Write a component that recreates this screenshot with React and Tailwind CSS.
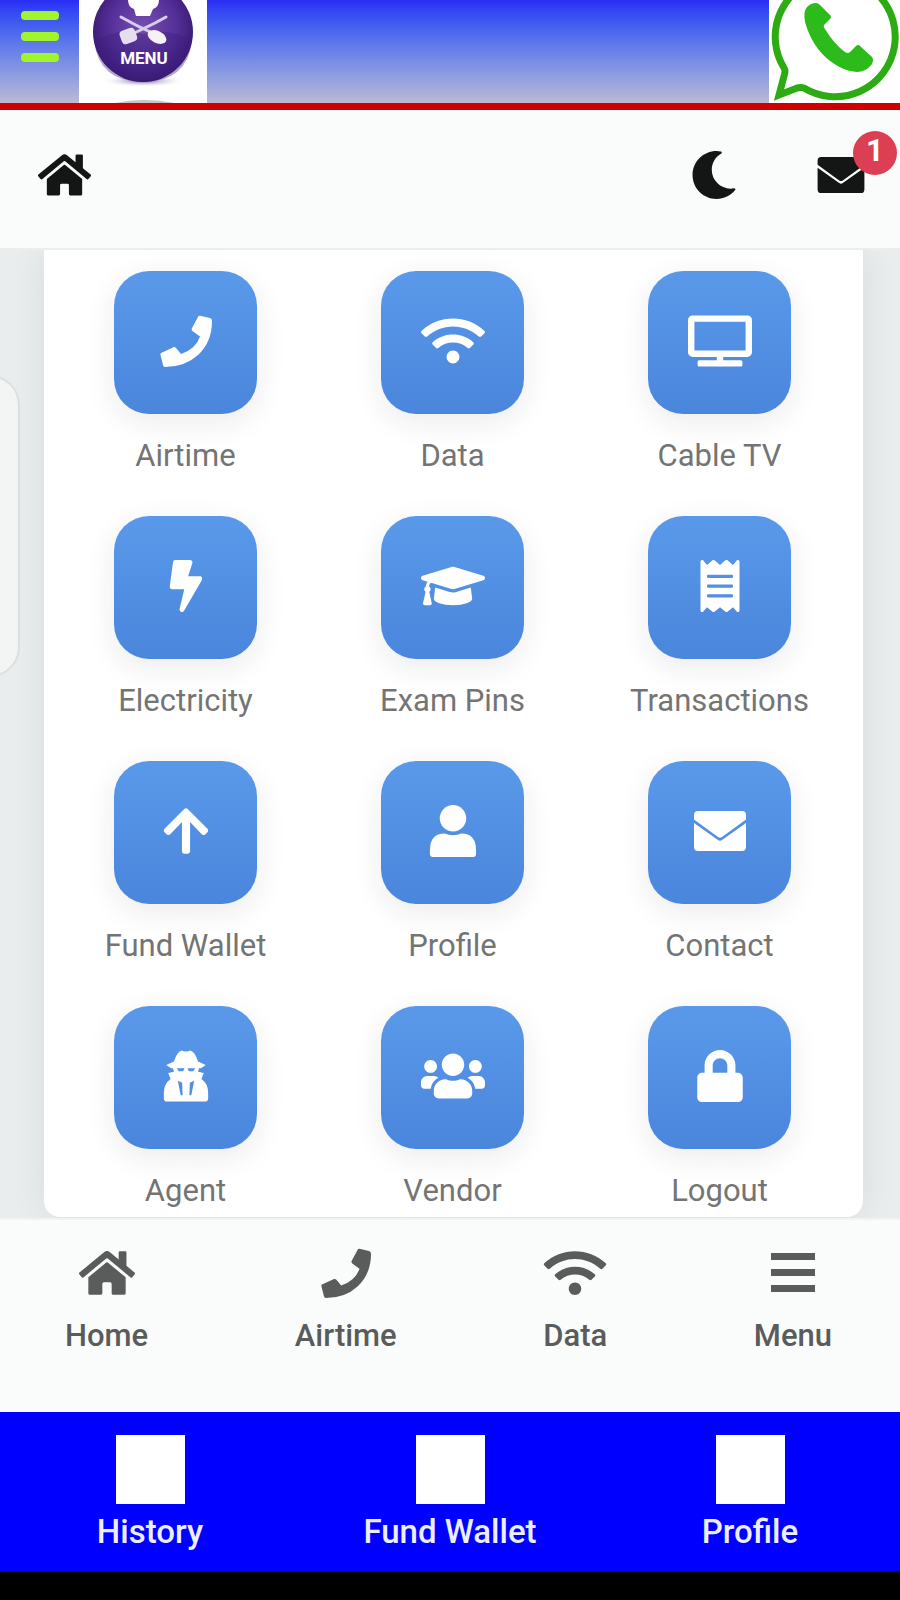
import {
  FaArrowUp, FaBolt, FaGraduationCap, FaHome, FaLock, FaMoon,
  FaReceipt, FaTv, FaUsers, FaWifi,
} from "react-icons/fa";

function PhoneIcon({ className }) {
  return (
    <svg viewBox="0 0 52 52" fill="currentColor" className={className}>
      <path d="M38 2 Q38.5 .5 40 .8 L50 3 Q52 3.5 52 6 Q52 27 38 40 Q25 52 5 52 Q3.5 52 3 50 L.5 40 Q0 38.3 1.6 37.7 L13.5 32.3 Q15 31.7 16 33 L21 39 Q36 34 40 21.5 L32.5 16 Q31.2 15 31.8 13.5Z" />
    </svg>
  );
}

function UserIcon({ className }) {
  return (
    <svg viewBox="0 0 47 53" fill="currentColor" className={className}>
      <circle cx="23.5" cy="13.5" r="13.5" />
      <path d="M0 46 Q0 29 15 29 Q23.5 32.5 32 29 Q47 29 47 46 V50 Q47 53 44 53 H3 Q0 53 0 50Z" />
    </svg>
  );
}

function EnvelopeIcon({ className }) {
  return (
    <svg viewBox="0 0 52 40" fill="currentColor" className={className}>
      <path d="M4 0 H48 Q52 0 52 4 V8.5 L28 26 Q26 27.5 24 26 L0 8.5 V4 Q0 0 4 0Z" />
      <path d="M0 12 L24 29 Q26 30.5 28 29 L52 12 V36 Q52 40 48 40 H4 Q0 40 0 36Z" />
    </svg>
  );
}

function AgentIcon({ className }) {
  return (
    <svg viewBox="0 0 47 54" fill="currentColor" fillRule="evenodd" className={className}>
      <path d="M11 12 Q14 2 19 .5 Q23.5 2.5 28 .5 Q33 2 36 12 L44 15.5 L39 19 H37 L36 22.5 L42 24 L39.5 30 Q46.5 35 46.5 44 V50 Q46.5 53.5 43 53.5 H4 Q.5 53.5 .5 50 V44 Q.5 35 7.5 30 L5 24 L11 22.5 L10 19 H8 L3 15.5Z M14 19 H22 L20.5 22 H16Z M25 19 H33 L31 22 H26.5Z M15 32 L19.5 34 L20 47 L18 47Z M32 32 L27.5 34 L27 47 L29 47Z" />
    </svg>
  );
}

function BarsIcon({ className }) {
  return (
    <svg viewBox="0 0 44 50" fill="currentColor" className={className}>
      <path d="M0 5h44v7H0z M0 21h44v7H0z M0 37h44v7H0z" />
    </svg>
  );
}

const SERVICES = [
  { label: "Airtime", icon: PhoneIcon, size: "w-[52px] h-[52px]" },
  { label: "Data", icon: FaWifi, size: "w-16 h-[52px]" },
  { label: "Cable TV", icon: FaTv, size: "w-16 h-[52px]" },
  { label: "Electricity", icon: FaBolt, size: "w-[52px] h-[52px]" },
  { label: "Exam Pins", icon: FaGraduationCap, size: "w-16 h-[52px]" },
  { label: "Transactions", icon: FaReceipt, size: "w-[52px] h-[52px]" },
  { label: "Fund Wallet", icon: FaArrowUp, size: "w-[52px] h-[52px]" },
  { label: "Profile", icon: UserIcon, size: "w-12 h-[52px]" },
  { label: "Contact", icon: EnvelopeIcon, size: "w-[52px] h-10" },
  { label: "Agent", icon: AgentIcon, size: "w-12 h-[52px]" },
  { label: "Vendor", icon: FaUsers, size: "w-16 h-[52px]" },
  { label: "Logout", icon: FaLock, size: "w-[52px] h-[52px]" },
];

const TABS = [
  { label: "Home", icon: FaHome, size: "w-14 h-[50px]" },
  { label: "Airtime", icon: PhoneIcon, size: "w-[50px] h-[50px]" },
  { label: "Data", icon: FaWifi, size: "w-16 h-[50px]" },
  { label: "Menu", icon: BarsIcon, size: "w-11 h-[50px]" },
];

const SHORTCUTS = ["History", "Fund Wallet", "Profile"];

function MenuLogo() {
  return (
    <svg viewBox="0 0 128 103" className="w-32 h-[103px] block bg-white" aria-label="Menu">
      <defs>
        <radialGradient id="ball" cx="50%" cy="45%" r="55%">
          <stop offset="0" stopColor="#7650ae" />
          <stop offset="0.6" stopColor="#56309a" />
          <stop offset="1" stopColor="#36186e" />
        </radialGradient>
        <radialGradient id="ballShadow">
          <stop offset="0" stopColor="#6d5a9c" />
          <stop offset="1" stopColor="#fff" stopOpacity="0" />
        </radialGradient>
      </defs>
      <ellipse cx="64" cy="81" rx="42" ry="6" fill="url(#ballShadow)" />
      <circle cx="64" cy="32" r="50" fill="url(#ball)" />
      <path d="M15 41 Q40 27 64 34 Q90 27 113 41 Q108 82 64 82 Q20 82 15 41Z" fill="#3c1d7c" opacity="0.4" />
      <path d="M49 0 H80 Q80 7 74 9 L71 16 H57 L55 9 Q49 7 49 0Z" fill="#fff" />
      <path d="M42 17 L53 23 Q64 29 81 36 M87 17 L76 23 Q64 29 49 36" fill="none" stroke="#d8cdea" strokeWidth="3" strokeLinecap="round" />
      <rect x="41" y="29" width="16" height="14" rx="4" fill="#e6deef" transform="rotate(-20 49 35)" />
      <ellipse cx="78" cy="37" rx="10" ry="6" fill="#f5f0fa" transform="rotate(25 78 37)" />
      <text x="65" y="64" textAnchor="middle" fill="#fff" fontSize="17" fontWeight="700" fontFamily="Roboto, sans-serif">
        MENU
      </text>
      <path d="M36 103 Q64 97 96 103Z" fill="#c4c4c4" />
    </svg>
  );
}

function WhatsappLogo() {
  return (
    <svg viewBox="0 0 131 103" className="w-[131px] h-[103px] block bg-white" aria-label="WhatsApp">
      <path
        d="M35 88 A60 60 0 1 0 15 68 Q17 71 15 76 L10 95 L28 88 Q32 87 35 88Z"
        fill="none"
        stroke="#2cab12"
        strokeWidth="7"
      />
      <path
        d="M38 7 Q42 3 47 3 Q49 3 51 5 L61 15 Q63 17 61 19 L55 25 Q54 27 56 29 Q65 44 76 52 Q79 54 81 52 L87 46 Q89 44 91 46 L103 57 Q105 60 103 64 Q97 72 88 72 Q76 72 61 61 Q43 47 36 22 Q34 12 38 7Z"
        fill="#2dbb1b"
      />
    </svg>
  );
}

function TopBar() {
  return (
    <div className="h-[110px] flex items-start border-b-[7px] border-[#d00000] bg-linear-to-b from-[#2b2bf4] to-[#bcb9d2]">
      <button aria-label="Open menu" className="w-[79px] pl-[21px] pt-[11px] flex flex-col gap-3">
        <span className="w-[38px] h-[9px] rounded-sm bg-[#a0f52c]" />
        <span className="w-[38px] h-[9px] rounded-sm bg-[#a0f52c]" />
        <span className="w-[38px] h-[9px] rounded-sm bg-[#a0f52c]" />
      </button>
      <a href="#menu"><MenuLogo /></a>
      <a href="#whatsapp" className="ml-auto"><WhatsappLogo /></a>
    </div>
  );
}

function Header() {
  return (
    <header className="h-[140px] pl-[38px] pr-[35px] pb-2 flex items-center bg-[#fafcfb] border-b-2 border-[#eceeed] text-[#141616]">
      <a href="#home" aria-label="Home"><FaHome className="w-[53px] h-12" /></a>
      <button aria-label="Dark mode" className="ml-auto mr-[79px]">
        <FaMoon className="w-12 h-12" />
      </button>
      <button aria-label="Messages" className="relative">
        <EnvelopeIcon className="w-12 h-9" />
        <span className="absolute -top-[26px] -right-8 w-11 h-11 rounded-full bg-[#dc3f53] text-white text-[31px] leading-[40px] font-bold">
          1
        </span>
      </button>
    </header>
  );
}

export default function App() {
  return (
    <div className="min-h-screen flex flex-col bg-black font-[Roboto,sans-serif]">
      <TopBar />
      <Header />

      {/* Services */}
      <main className="relative grow pl-11 pr-[37px] bg-[#e9eded] overflow-hidden">
        <div className="absolute -left-10 top-[125px] w-[60px] h-[302px] rounded-[32px] bg-[#f3f5f5] border-2 border-[#dde0e0]" />
        <div className="relative grid grid-cols-3 gap-y-[42px] pl-2 pr-2.5 pt-[21px] pb-2 bg-white rounded-b-2xl shadow-[0_0_36px_rgba(0,20,10,0.08)]">
          {SERVICES.map(({ label, icon: Icon, size }) => (
            <a key={label} href="#service" className="flex flex-col items-center gap-6">
              <span className="w-[143px] h-[143px] flex items-center justify-center pb-1 rounded-[35px] bg-linear-to-b from-[#5a99ea] to-[#4a86dc] text-white shadow-[0_8px_30px_rgba(60,30,30,0.09)]">
                <Icon className={size} />
              </span>
              <span className="text-[31px] leading-9 text-[#747474]">{label}</span>
            </a>
          ))}
        </div>
      </main>

      {/* Tab bar */}
      <nav className="h-[194px] pl-[65px] pr-[68px] pt-7 flex items-start justify-between bg-[#fafcfb] border-t-2 border-[#f1f3f2]">
        {TABS.map(({ label, icon: Icon, size }) => (
          <a key={label} href="#tab" className="flex flex-col items-center gap-5 text-[#5a5c5c]">
            <Icon className={size} />
            <span className="text-[31px] leading-9 font-medium">{label}</span>
          </a>
        ))}
      </nav>

      {/* Shortcuts */}
      <nav className="h-[159px] mb-[29px] pt-[23px] grid grid-cols-3 bg-[#0000ff]">
        {SHORTCUTS.map((label) => (
          <a key={label} href="#shortcut" className="flex flex-col items-center gap-2 text-[#eceeff]">
            <span className="w-[69px] h-[69px] bg-white" />
            <span className="text-[33px] leading-10 font-medium">{label}</span>
          </a>
        ))}
      </nav>
    </div>
  );
}
